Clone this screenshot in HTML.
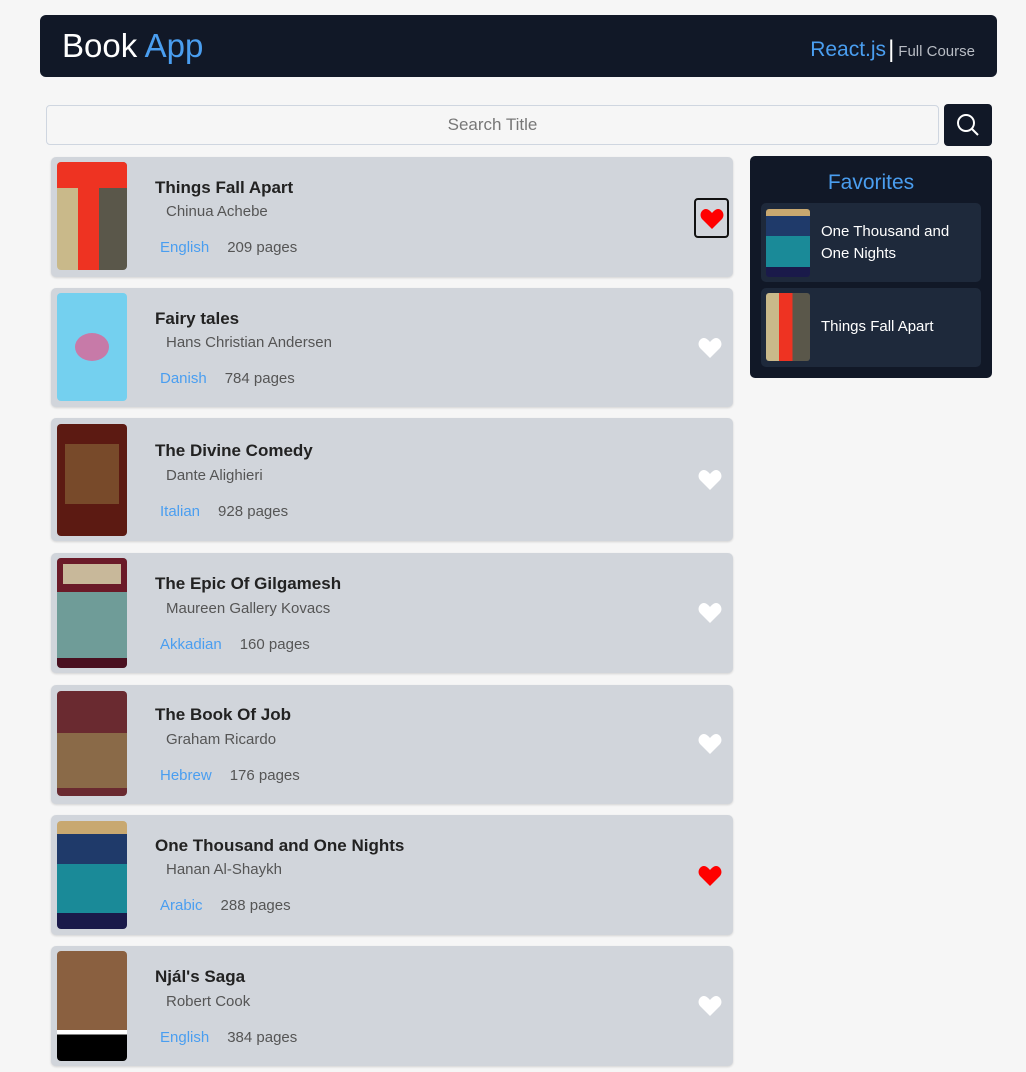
<!DOCTYPE html>
<html><head><meta charset="utf-8"><style>
*{box-sizing:border-box;margin:0;padding:0}
body{width:1026px;height:1072px;background:#f6f6f6;font-family:"Liberation Sans",sans-serif;position:relative;overflow:hidden}
.hdr{position:absolute;left:40px;top:15px;width:957px;height:62px;background:#111827;border-radius:6px}
.hdr .t{position:absolute;left:22px;top:12px;font-size:33px;color:#fff}
.hdr .t span{color:#4a9ef0}
.hdr .r{position:absolute;right:22px;top:20px;color:#4a9ef0;font-size:21px}
.hdr .r b{font-weight:normal;color:#fff;font-size:24px;margin:0 4px 0 2px;position:relative;top:1px}
.hdr .r i{font-style:normal;color:#b8bcc4;font-size:15px}
.search{position:absolute;left:46px;top:105px;width:893px;height:40px;border:1px solid #cfd6e0;border-radius:4px;text-align:center;line-height:38px;font-size:17px;color:#777;background:#f6f6f6}
.sbtn{position:absolute;left:944px;top:104px;width:48px;height:42px;background:#111827;border-radius:4px}
.card{position:absolute;left:51px;width:682px;background:#d1d5db;border-radius:5px;box-shadow:0 1px 2px rgba(0,0,0,.15)}
.cov{position:absolute;left:6px;width:70px;border-radius:4px;overflow:hidden}
.ti{position:absolute;left:104px;font-size:17px;font-weight:bold;color:#222}
.au{position:absolute;left:115px;font-size:15px;color:#555}
.la{position:absolute;left:109px;font-size:15px;color:#4a9ef0}
.pg{color:#555;margin-left:18px}
.ht{position:absolute;left:647px}
.fav{position:absolute;left:750px;top:156px;width:242px;height:222px;background:#111827;border-radius:5px}
.fav h2{font-weight:normal;color:#4a9ef0;font-size:21px;text-align:center;margin-top:15px}
.fi{position:absolute;left:11px;width:220px;background:#1e293b;border-radius:5px}
.fi .c{position:absolute;left:5px;top:6px;width:44px;height:68px;border-radius:3px}
.fi p{position:absolute;left:60px;color:#fff;font-size:15px;line-height:22px}
</style></head><body>
<div class="hdr"><div class="t">Book <span>App</span></div><div class="r">React.js<b>|</b><i>Full Course</i></div></div>
<div class="search">Search Title</div>
<div class="sbtn"><svg width="48" height="42"><circle cx="22" cy="19" r="8" fill="none" stroke="#fff" stroke-width="2"/><line x1="28" y1="25" x2="34" y2="31" stroke="#fff" stroke-width="2"/></svg></div>

<div class="card" style="top:157px;height:120px">
<div class="cov" style="top:5px;height:108px;background:linear-gradient(90deg,#c9b98a 0 30%,#ee3322 30% 60%,#5a574a 60%)"><div style="height:26px;background:#ee3322"></div></div>
<div class="ti" style="top:21px">Things Fall Apart</div><div class="au" style="top:46px">Chinua Achebe</div><div class="la" style="top:82px">English<span class="pg">209 pages</span></div>
<div class="ht" style="left:643px;top:41px;width:35px;height:40px;border:2px solid #111;border-radius:4px"><svg style="position:absolute;left:4px;top:8px" width="24" height="22" viewBox="0 0 24 22"><path d="M12 21 L2 11 C-2 6 3 -1 8 1.5 C10 2.5 11 4 12 5 C13 4 14 2.5 16 1.5 C21 -1 26 6 22 11 Z" fill="#f00"/></svg></div>
</div>

<div class="card" style="top:288px;height:119px">
<div class="cov" style="top:5px;height:108px;background:#74d0ef"><div style="margin:40px 0 0 18px;width:34px;height:28px;border-radius:50%;background:#c77aa8"></div></div>
<div class="ti" style="top:21px">Fairy tales</div><div class="au" style="top:46px">Hans Christian Andersen</div><div class="la" style="top:82px">Danish<span class="pg">784 pages</span></div>
</div>

<div class="card" style="top:418px;height:123px">
<div class="cov" style="top:6px;height:112px;background:#5c1a12"><div style="margin:20px 8px;height:60px;background:#8a6a3a;opacity:.6"></div></div>
<div class="ti" style="top:23px">The Divine Comedy</div><div class="au" style="top:49px">Dante Alighieri</div><div class="la" style="top:85px">Italian<span class="pg">928 pages</span></div>
</div>

<div class="card" style="top:553px;height:120px">
<div class="cov" style="top:5px;height:110px;background:#6f9c98"><div style="height:34px;background:#6b1a28;padding:6px"><div style="height:20px;background:#c8b89a"></div></div><div style="margin-top:66px;height:10px;background:#4a1020"></div></div>
<div class="ti" style="top:21px">The Epic Of Gilgamesh</div><div class="au" style="top:47px">Maureen Gallery Kovacs</div><div class="la" style="top:83px">Akkadian<span class="pg">160 pages</span></div>
</div>

<div class="card" style="top:685px;height:119px">
<div class="cov" style="top:6px;height:105px;background:#6a2a30"><div style="margin-top:42px;height:55px;background:#8a6a48"></div></div>
<div class="ti" style="top:20px">The Book Of Job</div><div class="au" style="top:46px">Graham Ricardo</div><div class="la" style="top:82px">Hebrew<span class="pg">176 pages</span></div>
</div>

<div class="card" style="top:815px;height:120px">
<div class="cov" style="top:6px;height:108px;background:linear-gradient(#c8a870 0 12%,#1f3a6a 12% 40%,#1a8a98 40% 85%,#1a1a4a 85%)"></div>
<div class="ti" style="top:21px">One Thousand and One Nights</div><div class="au" style="top:46px">Hanan Al-Shaykh</div><div class="la" style="top:82px">Arabic<span class="pg">288 pages</span></div>
<div class="ht" style="top:50px"><svg width="24" height="22" viewBox="0 0 24 22"><path d="M12 21 L2 11 C-2 6 3 -1 8 1.5 C10 2.5 11 4 12 5 C13 4 14 2.5 16 1.5 C21 -1 26 6 22 11 Z" fill="#f00"/></svg></div>
</div>

<div class="card" style="top:946px;height:120px">
<div class="cov" style="top:5px;height:110px;background:linear-gradient(#8a6040 0 72%,#fff 72% 76%,#000 76%)"></div>
<div class="ti" style="top:21px">Njál's Saga</div><div class="au" style="top:47px">Robert Cook</div><div class="la" style="top:83px">English<span class="pg">384 pages</span></div>
</div>

<div class="fav"><h2>Favorites</h2>
<div class="fi" style="top:47px;height:79px"><div class="c" style="background:linear-gradient(#c8a870 0 10%,#1f3a6a 10% 40%,#1a8a98 40% 85%,#1a1a4a 85%)"></div><p style="top:18px">One Thousand and<br>One Nights</p></div>
<div class="fi" style="top:132px;height:79px"><div class="c" style="top:5px;background:linear-gradient(90deg,#c9b98a 0 30%,#ee3322 30% 60%,#5a574a 60%)"></div><p style="top:28px">Things Fall Apart</p></div>
</div>

<script></script>
<div id="hearts"></div>
<style>.wh{position:absolute;left:698px}</style>
<svg class="wh" style="top:337px" width="24" height="22" viewBox="0 0 24 22"><path d="M12 21 L2 11 C-2 6 3 -1 8 1.5 C10 2.5 11 4 12 5 C13 4 14 2.5 16 1.5 C21 -1 26 6 22 11 Z" fill="#fff"/></svg>
<svg class="wh" style="top:469px" width="24" height="22" viewBox="0 0 24 22"><path d="M12 21 L2 11 C-2 6 3 -1 8 1.5 C10 2.5 11 4 12 5 C13 4 14 2.5 16 1.5 C21 -1 26 6 22 11 Z" fill="#fff"/></svg>
<svg class="wh" style="top:602px" width="24" height="22" viewBox="0 0 24 22"><path d="M12 21 L2 11 C-2 6 3 -1 8 1.5 C10 2.5 11 4 12 5 C13 4 14 2.5 16 1.5 C21 -1 26 6 22 11 Z" fill="#fff"/></svg>
<svg class="wh" style="top:733px" width="24" height="22" viewBox="0 0 24 22"><path d="M12 21 L2 11 C-2 6 3 -1 8 1.5 C10 2.5 11 4 12 5 C13 4 14 2.5 16 1.5 C21 -1 26 6 22 11 Z" fill="#fff"/></svg>
<svg class="wh" style="top:995px" width="24" height="22" viewBox="0 0 24 22"><path d="M12 21 L2 11 C-2 6 3 -1 8 1.5 C10 2.5 11 4 12 5 C13 4 14 2.5 16 1.5 C21 -1 26 6 22 11 Z" fill="#fff"/></svg>
</body></html>
